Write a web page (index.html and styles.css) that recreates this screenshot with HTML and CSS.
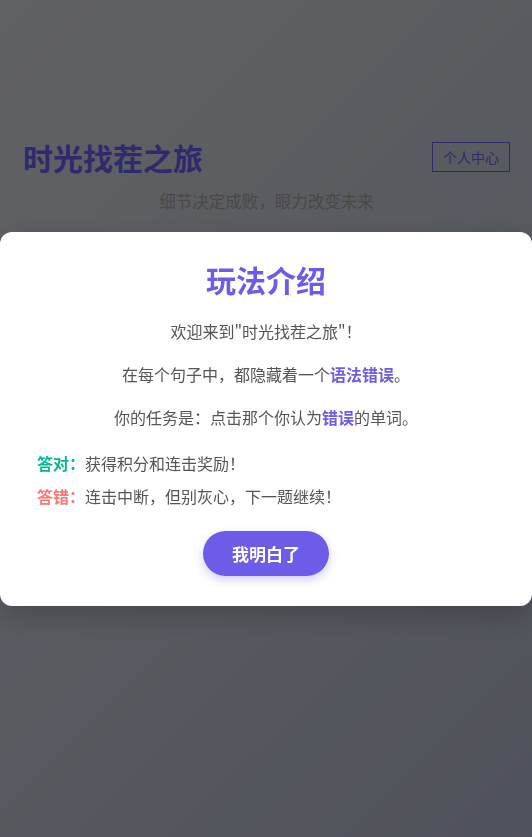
FILE: index.html
```html
<!DOCTYPE html>
<html lang="zh-CN">
<head>
<meta charset="utf-8">
<title>时光找茬之旅</title>
<link rel="stylesheet" href="styles.css">
</head>
<body>
<div class="page">
  <header class="header">
    <h1 class="brand">时光找茬之旅</h1>
    <button class="profile-btn">个人中心</button>
  </header>
  <p class="tagline">细节决定成败，眼力改变未来</p>
</div>

<div class="overlay">
  <div class="modal">
    <h2 class="modal-title">玩法介绍</h2>
    <p class="modal-text">欢迎来到"时光找茬之旅"！</p>
    <p class="modal-text">在每个句子中，都隐藏着一个<strong class="hl">语法错误</strong>。</p>
    <p class="modal-text">你的任务是：点击那个你认为<strong class="hl">错误</strong>的单词。</p>
    <ul class="rules">
      <li><strong class="ok">答对：</strong>获得积分和连击奖励！</li>
      <li><strong class="bad">答错：</strong>连击中断，但别灰心，下一题继续！</li>
    </ul>
    <div class="actions">
      <button class="got-it">我明白了</button>
    </div>
  </div>
</div>
</body>
</html>
```

FILE: styles.css
```css
* { box-sizing: border-box; }

html, body {
  margin: 0;
  padding: 0;
}

body {
  min-height: 100vh;
  font-family: "Noto Sans CJK SC", "Noto Sans", sans-serif;
  background: linear-gradient(135deg, #d7d9de 0%, #c2c8d4 50%, #afb7c9 100%);
  color: #333;
  text-spacing-trim: space-all;
}

.page {
  padding: 139px 22px 0 23px;
}

.header {
  display: flex;
  justify-content: space-between;
  align-items: center;
}

.brand {
  margin: 0;
  font-size: 30px;
  line-height: 36px;
  font-weight: 700;
  color: #685ef2;
}

.profile-btn {
  font-family: inherit;
  font-size: 14px;
  line-height: 18px;
  padding: 5px 10px;
  background: transparent;
  color: #685ef2;
  border: 1px solid #685ef2;
  border-radius: 0;
}

.tagline {
  margin: 14px 0 0;
  text-align: center;
  font-size: 16.5px;
  line-height: 25px;
  color: #a0a0a0;
}

.overlay {
  position: fixed;
  inset: 0;
  background: rgba(0, 0, 0, 0.55);
  display: flex;
  align-items: center;
  justify-content: center;
}

.modal {
  width: 100%;
  background: #fff;
  border-radius: 12px;
  padding: 27px 37px 30px;
  text-align: center;
  box-shadow: 0 10px 30px rgba(0, 0, 0, 0.2);
}

.modal-title {
  margin: 0 0 20px;
  font-size: 30px;
  line-height: 40px;
  font-weight: 700;
  color: #6c5ce7;
}

.modal-text {
  margin: 0 0 18px;
  font-size: 16px;
  line-height: 25px;
  color: #555;
}

.hl {
  color: #6c5ce7;
  font-weight: 700;
}

.rules {
  list-style: none;
  margin: 21px 0 0;
  padding: 0;
  text-align: left;
}

.rules li {
  font-size: 16px;
  line-height: 25px;
  color: #555;
  margin-bottom: 8px;
}

.ok { color: #00b894; }
.bad { color: #ff7675; }

.actions {
  margin-top: 22px;
  display: flex;
  justify-content: center;
}

.got-it {
  font-family: inherit;
  font-size: 17px;
  font-weight: 700;
  color: #fff;
  background: #6c5ce7;
  border: none;
  border-radius: 23px;
  width: 126px;
  height: 45px;
  box-shadow: 0 4px 10px rgba(108, 92, 231, 0.3);
}
```
